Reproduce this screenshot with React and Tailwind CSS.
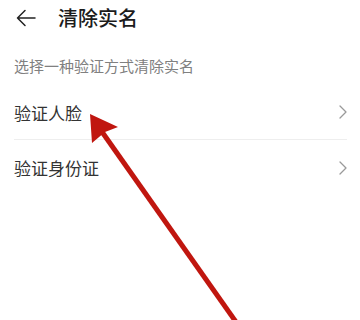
export default function App() {
  const items = ['验证人脸', '验证身份证']

  return (
    <div
      className="relative w-[360px] h-[320px] overflow-hidden bg-white"
      style={{ fontFamily: '"Noto Sans CJK SC", "Noto Sans", sans-serif' }}
    >
      {/* header */}
      <div className="h-9 flex items-center pl-4">
        <svg width="20" height="18" viewBox="0 0 20 18" fill="none" stroke="#222" strokeWidth="1.5" strokeLinecap="round" strokeLinejoin="round">
          <path d="M19 9H1.5M9 1.5L1.5 9L9 16.5" />
        </svg>
        <span className="ml-[22px] text-[20px] leading-none text-[#1c1c1c] font-medium">清除实名</span>
      </div>

      <p className="mt-5 px-[14px] text-[15px] leading-5 text-[#808080]">选择一种验证方式清除实名</p>

      <div className="mt-[9px]">
        {items.map((label, i) => (
          <div key={label} className="px-[14px] pr-[13px]">
            <div className={`h-[55px] flex items-center justify-between ${i === 0 ? 'border-b border-[#eeeeee]' : ''}`}>
              <span className="text-[17px] leading-none text-[#333333]">{label}</span>
              <svg width="8" height="14" viewBox="0 0 8 14" fill="none" stroke="#9a9a9a" strokeWidth="1.3" strokeLinecap="round" strokeLinejoin="round">
                <path d="M1 1L7 7L1 13" />
              </svg>
            </div>
          </div>
        ))}
      </div>

      {/* red annotation arrow */}
      <svg className="absolute inset-0 pointer-events-none" width="360" height="320" viewBox="0 0 360 320">
        <line x1="100" y1="129" x2="236" y2="322" stroke="#c0160f" strokeWidth="5" />
        <path d="M90 114L118 127L105 132L92 143Z" fill="#c0160f" />
      </svg>
    </div>
  )
}
